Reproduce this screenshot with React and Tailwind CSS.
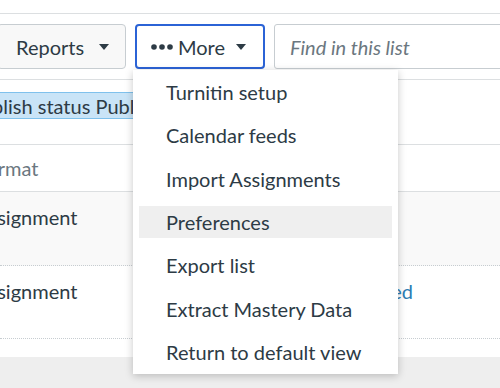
import React from 'react';

const Caret = () => (
  <svg width="10" height="6" viewBox="0 0 10 6" className="shrink-0">
    <path d="M0 0h10L5 6z" fill="#2d3b45" />
  </svg>
);

const Dots = () => (
  <svg width="22" height="6" viewBox="0 0 22 6" className="shrink-0">
    <circle cx="3" cy="3" r="2.8" fill="#2d3b45" />
    <circle cx="11" cy="3" r="2.8" fill="#2d3b45" />
    <circle cx="19" cy="3" r="2.8" fill="#2d3b45" />
  </svg>
);

const menuItems = [
  'Turnitin setup',
  'Calendar feeds',
  'Import Assignments',
  'Preferences',
  'Export list',
  'Extract Mastery Data',
  'Return to default view',
];

export default function App() {
  return (
    <div
      className="relative w-[500px] h-[388px] overflow-hidden bg-white text-[#2d3b45] text-[20px]"
      style={{ fontFamily: 'Lato, "Noto Sans", sans-serif' }}
    >
      <div className="h-[14px] border-b border-[#dcdfe1]" />

      <div className="flex items-center gap-[9px] pt-[10px] pb-[10px] border-b border-[#dcdfe1] -ml-[3px]">
        <div className="flex items-center gap-[15px] h-[45px] w-[129px] pl-[18px] bg-[#f8f8f8] border border-[#c7cdd1] rounded-[4px] shrink-0">
          <span>Reports</span>
          <Caret />
        </div>
        <div className="flex items-center h-[45px] w-[130px] pl-[14px] border-2 border-[#2b63d6] rounded-[4px] shrink-0">
          <Dots />
          <span className="ml-[5px]">More</span>
          <span className="ml-[11px]"><Caret /></span>
        </div>
        <div className="flex items-center h-[45px] flex-1 min-w-[240px] pl-[15px] border border-[#c7cdd1] rounded-[3px] italic text-[#6b7780]">
          Find in this list
        </div>
      </div>

      <div className="h-[65px] border-b border-[#dcdfe1] pt-[12px]">
        <div className="flex items-center h-[27px] w-[180px] bg-[#c9e4f7] border-y border-[#7fc1ec] overflow-hidden">
          <span className="whitespace-nowrap -ml-[31px]">Publish status Published</span>
        </div>
      </div>

      <div className="flex items-center h-[47px] border-b border-[#dcdfe1] text-[#6b7780]">
        <span className="-ml-[24px]">Format</span>
      </div>

      <div className="h-[74px] bg-[#f9f9f9] border-b border-dotted border-[#c7cdd1] pt-[10px]">
        <span className="-ml-[25px] inline-block">Assignment</span>
      </div>

      <div className="flex justify-between h-[73px] border-b border-dotted border-[#c7cdd1] pt-[10px]">
        <span className="-ml-[25px] inline-block">Assignment</span>
        <span className="text-[#2d7db3] mr-[87px]">Published</span>
      </div>

      <div className="h-[18px]" />
      <div className="h-[40px] bg-[#eeeeee]" />

      <div className="absolute left-[133px] top-[70px] w-[265px] h-[304px] bg-white shadow-[0_2px_8px_rgba(0,0,0,0.22)] pt-[6px] flex flex-col gap-[11.33px]">
        {menuItems.map((item) => (
          <div
            key={item}
            className={`flex items-center h-[32px] mx-[6px] pl-[27px] whitespace-nowrap ${item === 'Preferences' ? 'bg-[#efefef]' : ''}`}
          >
            {item}
          </div>
        ))}
      </div>
    </div>
  );
}
